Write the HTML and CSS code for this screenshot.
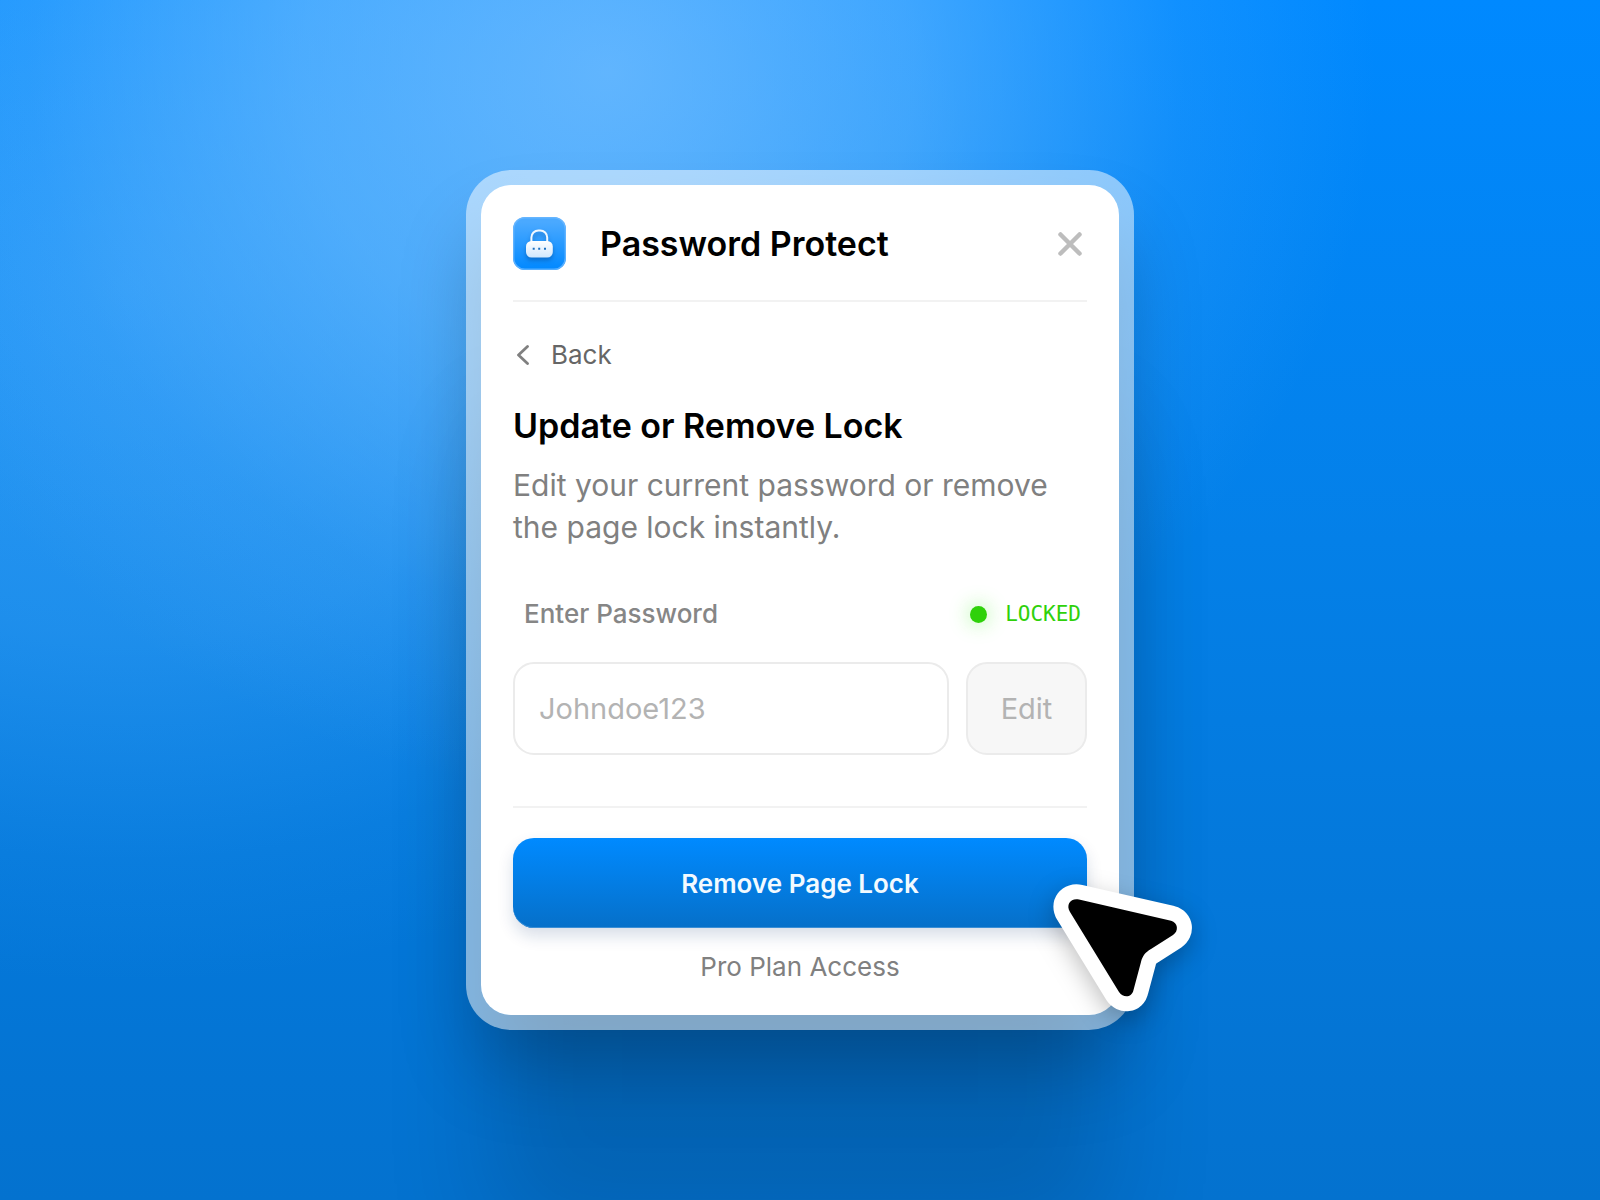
FILE: index.html
```
<!DOCTYPE html>
<html lang="en">
<head>
  <meta charset="UTF-8">
  <meta name="viewport" content="width=device-width, initial-scale=1.0">
  <title>Password Protect</title>
  <link rel="stylesheet" href="styles.css">
</head>
<body>
  <main class="frame">
    <div class="card">
      <header class="card-header">
        <svg class="logo" viewBox="0 0 53 53" aria-hidden="true">
          <defs>
            <linearGradient id="tile" x1="0" y1="0" x2="0" y2="1">
              <stop offset="0.1" stop-color="#4aa9ff"/>
              <stop offset="1" stop-color="#0088ff"/>
            </linearGradient>
            <linearGradient id="body" x1="0" y1="0" x2="0" y2="1">
              <stop offset="0" stop-color="#ffffff"/>
              <stop offset="1" stop-color="#cfe7fd"/>
            </linearGradient>
          </defs>
          <rect width="53" height="53" rx="12" fill="url(#tile)"/>
          <rect x="0.7" y="0.7" width="51.6" height="51.6" rx="11.3" fill="none" stroke="#6bb8ff" stroke-width="1.4" opacity="0.8"/>
          <g class="padlock">
            <path d="M18.4 25V20.5a7 7 0 0 1 7-7h1.8a7 7 0 0 1 7 7V25" fill="none" stroke="#f0f8ff" stroke-width="2"/>
            <rect x="13" y="24" width="26.8" height="16.6" rx="5.5" fill="url(#body)"/>
          </g>
          <path d="M19.7 30.8h2v2h-2zM25.2 30.8h2v2h-2zM31 30.8h2v2h-2z" fill="#1b6fc0"/>
        </svg>
        <h1>Password Protect</h1>
        <button class="close" type="button" aria-label="Close">
          <svg width="24" height="24" viewBox="0 0 24 24"><path d="M2.5 2.5l19 19M21.5 2.5l-19 19"/></svg>
        </button>
      </header>

      <a class="back" href="#">
        <svg width="12" height="20" viewBox="0 0 12 20"><path d="M10.5 1.5L1.5 10l9 8.5"/></svg>
        Back
      </a>

      <h2>Update or Remove Lock</h2>
      <p class="intro">Edit your current password or remove the page lock instantly.</p>

      <div class="label-row">
        <label for="password">Enter Password</label>
        <span class="status">LOCKED</span>
      </div>
      <div class="field-row">
        <input id="password" type="text" placeholder="Johndoe123">
        <button class="edit" type="button">Edit</button>
      </div>

      <footer>
        <button class="remove" type="button">Remove Page Lock</button>
        <p class="plan">Pro Plan Access</p>
      </footer>
    </div>

    <svg class="cursor" width="138" height="127" viewBox="0 0 138 127" aria-hidden="true">
      <path class="cursor-edge" d="M16 28C11.5 20.5 17 13.8 25 15.6L117 36.7C124 38.5 125 47 119 51L97 65C91 68.5 88.5 72 87 78L79.5 106C78 113.5 69.5 114.5 65 108Z"/>
      <path d="M16 28C11.5 20.5 17 13.8 25 15.6L117 36.7C124 38.5 125 47 119 51L97 65C91 68.5 88.5 72 87 78L79.5 106C78 113.5 69.5 114.5 65 108Z"/>
    </svg>
  </main>
</body>
</html>
```
FILE: styles.css
```
* { box-sizing: border-box; }

body {
  margin: 0;
  min-height: 100vh;
  display: grid;
  place-items: center;
  overflow-x: hidden;
  font-family: Inter, "Liberation Sans", sans-serif;
  background:
    radial-gradient(ellipse 48% 60% at 38% 6%, rgba(116, 190, 255, 0.8), rgba(114, 190, 255, 0.55) 40%, rgba(110, 186, 255, 0.15) 75%, transparent),
    radial-gradient(ellipse 54% 58% at 8% 24%, rgba(90, 180, 252, 0.46), rgba(90, 180, 252, 0.3) 50%, rgba(90, 180, 252, 0.07) 82%, transparent),
    linear-gradient(#0089ff, #0480e8 45%, #0474d3 90%, #0472cf);
}

h1, h2, p { margin: 0; }
button, input { font-family: inherit; }
button { cursor: pointer; }

.frame {
  position: relative;
  width: 100%;
  max-width: 668px;
  padding: 15px;
  border-radius: 45px;
  background: rgba(255, 255, 255, 0.5);
}

/* soft shadow under the translucent frame */
.frame::before {
  content: "";
  position: absolute;
  inset: 15px;
  z-index: -1;
  border-radius: 30px;
  box-shadow:
    0 50px 80px rgba(0, 0, 0, 0.25),
    0 230px 110px -10px rgba(0, 0, 0, 0.14);
}

.card {
  padding: 32px;
  border-radius: 30px;
  background: white;
}

.card-header {
  display: flex;
  align-items: center;
  padding-bottom: 30px;
  border-bottom: 2px solid #f2f2f2;
}
.logo { width: 53px; height: 53px; margin-right: 34px; }
.padlock { filter: drop-shadow(0 3px 2px rgba(0, 60, 130, 0.4)); }
h1, h2 { font-size: 34px; line-height: 42px; font-weight: 600; color: black; }

.close {
  display: flex;
  margin-left: auto;
  padding: 5px;
  border: 0;
  background: none;
}
.close path { stroke: #bdbdbd; stroke-width: 4.5; stroke-linecap: round; }

.back {
  display: flex;
  align-items: center;
  gap: 22px;
  width: max-content;
  margin: 37px 0 34px;
  padding-left: 4px;
  font-size: 26px;
  line-height: 32px;
  color: #666;
  text-decoration: none;
}
.back path { fill: none; stroke: #808080; stroke-width: 2.8; stroke-linecap: round; stroke-linejoin: round; }

.intro { margin-top: 17px; font-size: 30px; line-height: 42px; color: #808080; }

.label-row {
  display: flex;
  align-items: center;
  justify-content: space-between;
  margin: 50px 0 32px;
  padding: 0 6px 0 11px;
  font-size: 26px;
  line-height: 32px;
  font-weight: 500;
  color: #868686;
}
.status {
  display: flex;
  align-items: center;
  gap: 18px;
  font-family: "DejaVu Sans Mono", monospace;
  font-size: 21px;
  font-weight: 400;
  color: #2fd10a;
}
.status::before {
  content: "";
  width: 17px;
  height: 17px;
  border-radius: 50%;
  background: #2fd10a;
  box-shadow: 0 0 20px 1px rgba(60, 240, 30, 0.4);
}

.field-row { display: flex; gap: 17px; margin-bottom: 51px; }
.field-row input, .edit {
  height: 93px;
  border: 2px solid #ebebeb;
  border-radius: 21px;
  font-size: 29px;
}
.field-row input { flex: 1; min-width: 0; padding: 0 24px; background: white; color: #333; }
.field-row input::placeholder { color: #b3b3b3; }
.edit { width: 121px; background: #f7f7f7; color: #b3b3b3; }

footer { padding-top: 30px; border-top: 2px solid #f2f2f2; text-align: center; }
.remove {
  width: 100%;
  height: 90px;
  border: 0;
  border-radius: 21px;
  background: linear-gradient(#008aff, #0670c9);
  box-shadow: 0 8px 16px rgba(10, 50, 110, 0.16), inset 0 -1px #3b8fd6;
  color: #f2faff;
  font-size: 26px;
  font-weight: 600;
}
.plan { margin-top: 23px; font-size: 26px; line-height: 32px; color: #808080; }

.cursor {
  position: absolute;
  right: -58px;
  bottom: 19px;
  overflow: visible;
  pointer-events: none;
  filter: drop-shadow(0 8px 12px rgba(0, 0, 0, 0.25));
}
.cursor-edge { fill: white; stroke: white; stroke-width: 30; stroke-linejoin: round; }
```
